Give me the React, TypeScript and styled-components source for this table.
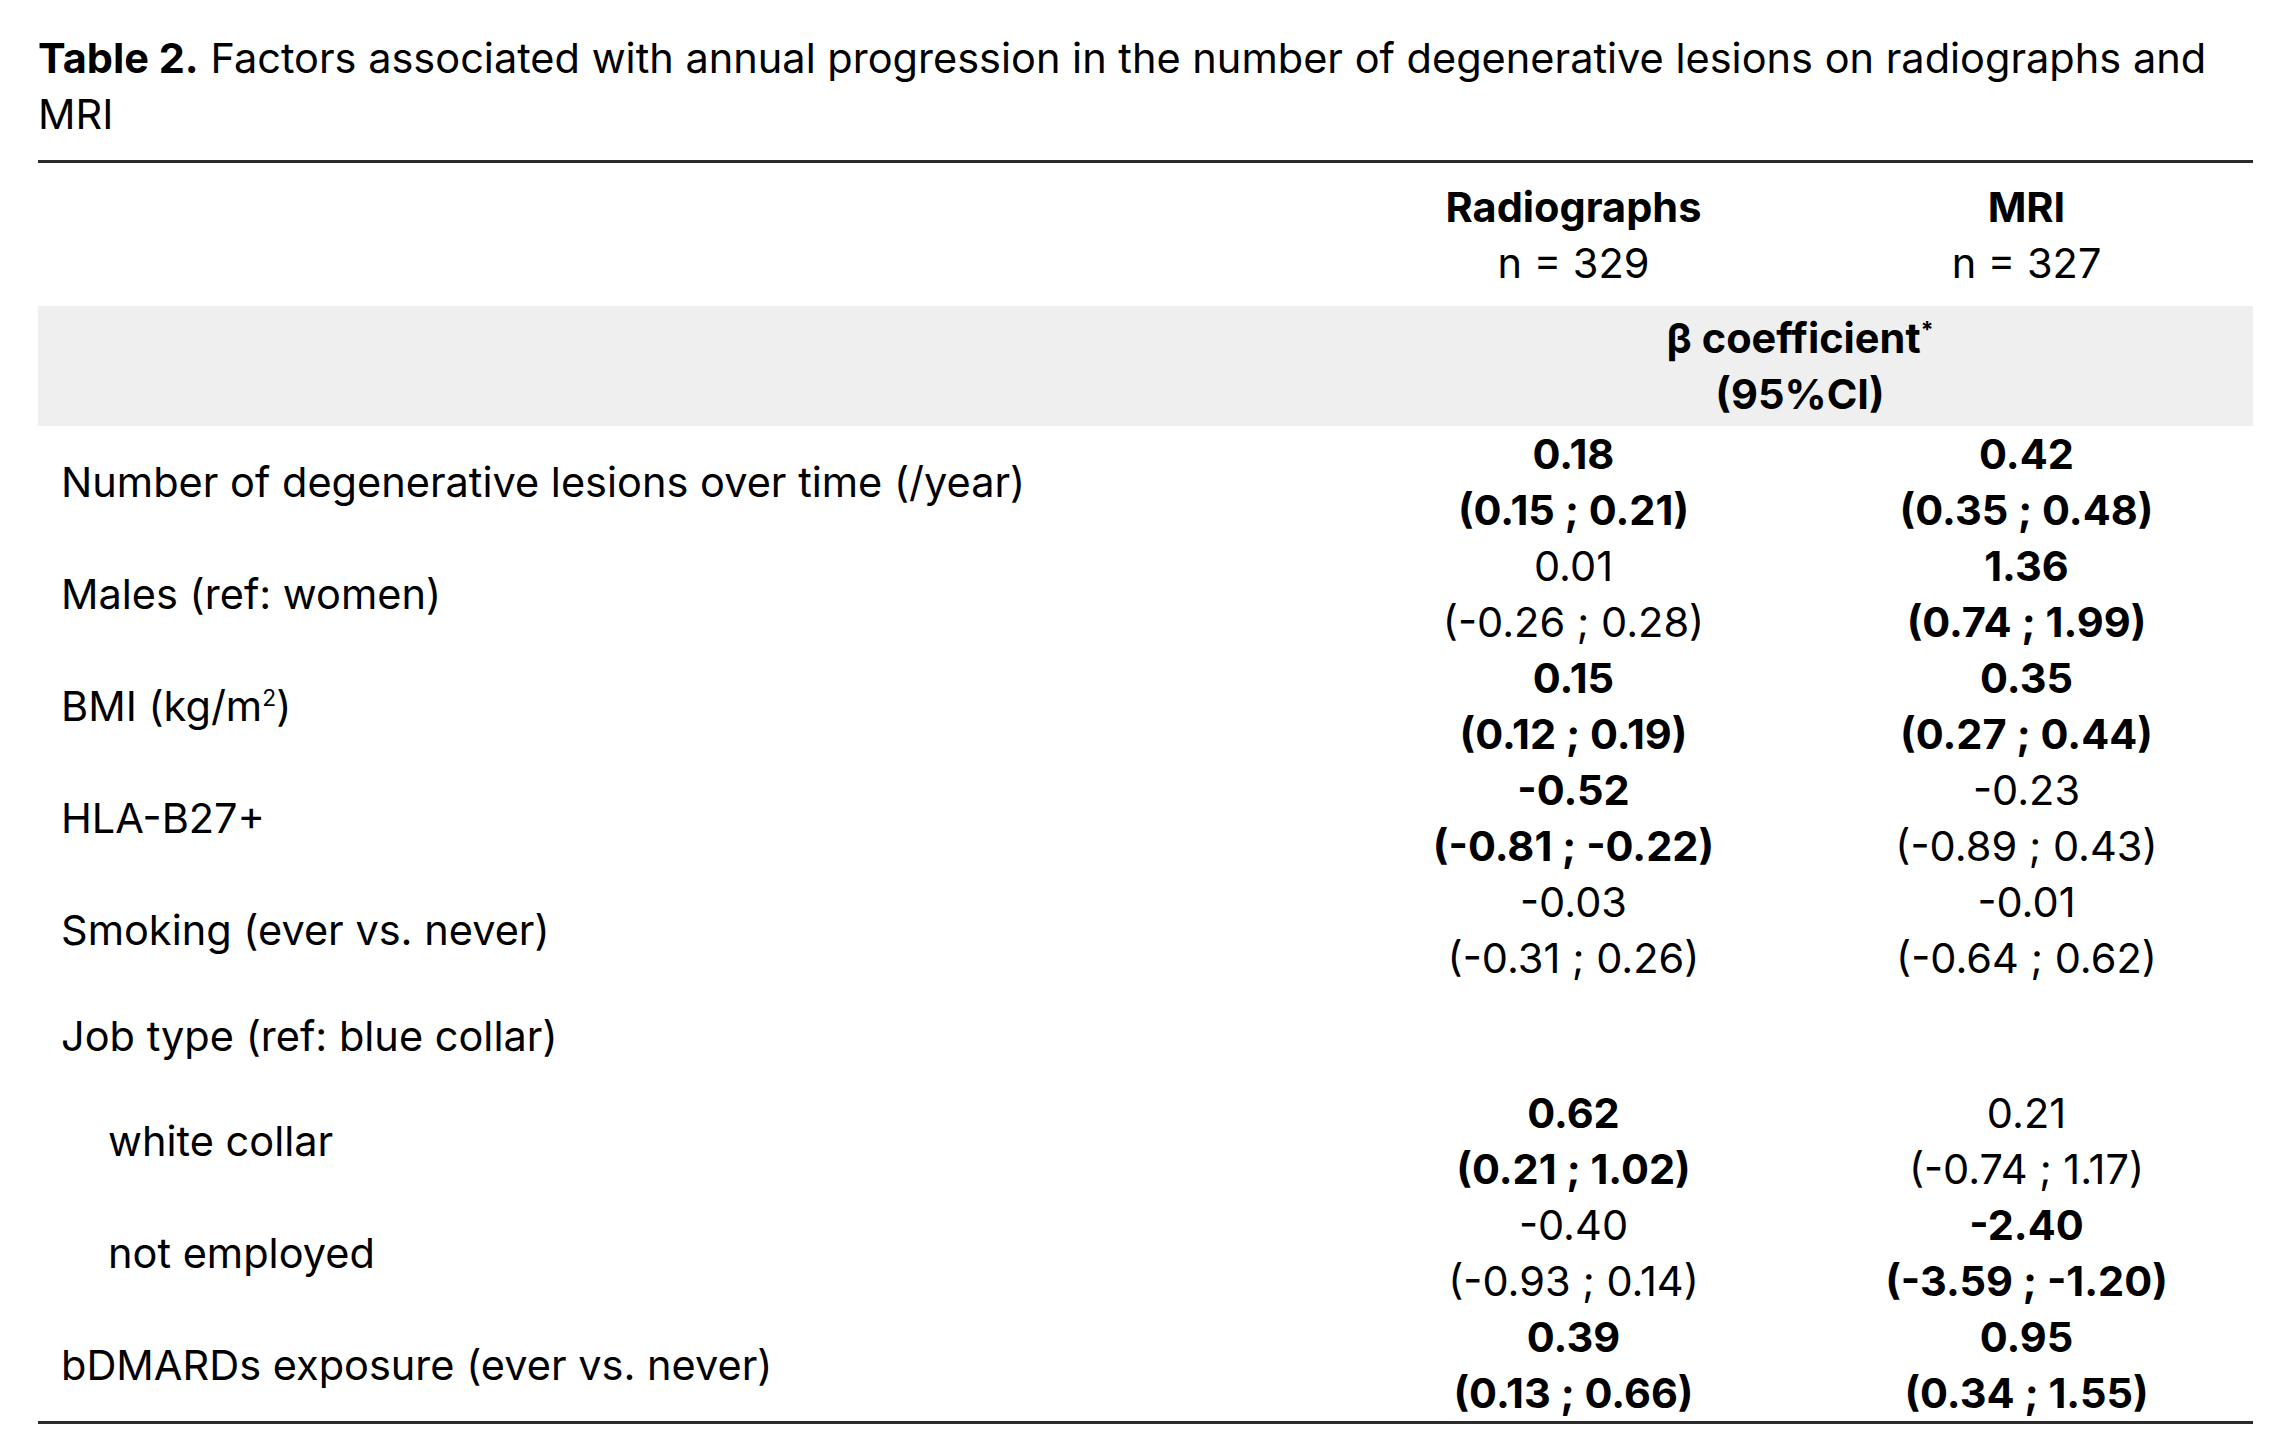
import React from 'react';
import styled, { createGlobalStyle } from 'styled-components';

const GlobalStyle = createGlobalStyle`
  html, body {
    margin: 0;
    padding: 0;
    background: #fff;
  }
  body {
    font-family: Inter, "Liberation Sans", Arial, sans-serif;
    color: #000;
  }
`;

const Page = styled.div`
  width: 2281px;
  padding: 30px 28px 0 38px;
  box-sizing: border-box;
`;

const Caption = styled.div`
  font-size: 41.5px;
  line-height: 56px;
  width: 2215px;
  margin-bottom: 18px;

  b {
    font-weight: 700;
  }
`;

const Table = styled.div`
  width: 2215px;
  display: grid;
  grid-template-columns: 1309px 453px 453px;
  border-top: 3px solid #2b2b2b;
  border-bottom: 3px solid #2b2b2b;
  font-size: 41.5px;
  line-height: 56px;
`;

const HeadCell = styled.div`
  padding: 16px 0 15px;
  text-align: center;
`;

const Band = styled.div`
  grid-column: 1 / span 3;
  display: grid;
  grid-template-columns: 1309px 906px;
  background: #efefef;
  padding: 4px 0;
`;

const BandText = styled.div`
  grid-column: 2;
  text-align: center;
  font-weight: 700;
`;

const Sup = styled.sup`
  font-size: 0.55em;
  line-height: 0;
  vertical-align: super;
`;

const Label = styled.div<{ $indent?: boolean; $short?: boolean }>`
  display: flex;
  align-items: center;
  padding-left: ${(p) => (p.$indent ? '70px' : '23px')};
  height: ${(p) => (p.$short ? '99px' : '112px')};
`;

const Value = styled.div<{ $bold?: boolean }>`
  display: flex;
  flex-direction: column;
  align-items: center;
  justify-content: center;
  font-weight: ${(p) => (p.$bold ? 700 : 400)};
`;

type Cell = { v: string; ci: string; bold: boolean };
type Row = { label: React.ReactNode; indent?: boolean; rad?: Cell; mri?: Cell };

const rows: Row[] = [
  {
    label: 'Number of degenerative lesions over time (/year)',
    rad: { v: '0.18', ci: '(0.15 ; 0.21)', bold: true },
    mri: { v: '0.42', ci: '(0.35 ; 0.48)', bold: true },
  },
  {
    label: 'Males (ref: women)',
    rad: { v: '0.01', ci: '(-0.26 ; 0.28)', bold: false },
    mri: { v: '1.36', ci: '(0.74 ; 1.99)', bold: true },
  },
  {
    label: (
      <>
        BMI (kg/m<Sup>2</Sup>)
      </>
    ),
    rad: { v: '0.15', ci: '(0.12 ; 0.19)', bold: true },
    mri: { v: '0.35', ci: '(0.27 ; 0.44)', bold: true },
  },
  {
    label: 'HLA-B27+',
    rad: { v: '-0.52', ci: '(-0.81 ; -0.22)', bold: true },
    mri: { v: '-0.23', ci: '(-0.89 ; 0.43)', bold: false },
  },
  {
    label: 'Smoking (ever vs. never)',
    rad: { v: '-0.03', ci: '(-0.31 ; 0.26)', bold: false },
    mri: { v: '-0.01', ci: '(-0.64 ; 0.62)', bold: false },
  },
  { label: 'Job type (ref: blue collar)' },
  {
    label: 'white collar',
    indent: true,
    rad: { v: '0.62', ci: '(0.21 ; 1.02)', bold: true },
    mri: { v: '0.21', ci: '(-0.74 ; 1.17)', bold: false },
  },
  {
    label: 'not employed',
    indent: true,
    rad: { v: '-0.40', ci: '(-0.93 ; 0.14)', bold: false },
    mri: { v: '-2.40', ci: '(-3.59 ; -1.20)', bold: true },
  },
  {
    label: 'bDMARDs exposure (ever vs. never)',
    rad: { v: '0.39', ci: '(0.13 ; 0.66)', bold: true },
    mri: { v: '0.95', ci: '(0.34 ; 1.55)', bold: true },
  },
];

const ValueCell: React.FC<{ cell?: Cell }> = ({ cell }) => (
  <Value $bold={cell?.bold}>
    {cell && (
      <>
        <span>{cell.v}</span>
        <span>{cell.ci}</span>
      </>
    )}
  </Value>
);

export default function App() {
  return (
    <Page>
      <GlobalStyle />
      <Caption>
        <b>Table 2.</b> Factors associated with annual progression in the number of degenerative
        lesions on radiographs and MRI
      </Caption>
      <Table>
        <HeadCell />
        <HeadCell>
          <b>Radiographs</b>
          <br />n = 329
        </HeadCell>
        <HeadCell>
          <b>MRI</b>
          <br />n = 327
        </HeadCell>
        <Band>
          <BandText>
            β coefficient<Sup>*</Sup>
            <br />
            (95%CI)
          </BandText>
        </Band>
        {rows.map((r, i) => (
          <React.Fragment key={i}>
            <Label $indent={r.indent} $short={!r.rad}>
              <span>{r.label}</span>
            </Label>
            <ValueCell cell={r.rad} />
            <ValueCell cell={r.mri} />
          </React.Fragment>
        ))}
      </Table>
    </Page>
  );
}
